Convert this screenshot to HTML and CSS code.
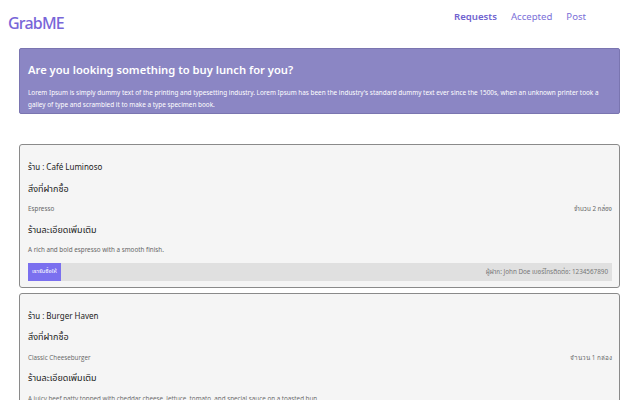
FILE: index.html
```html
<!DOCTYPE html>
<html lang="th">
<head>
<meta charset="utf-8">
<title>GrabME</title>
<link rel="stylesheet" href="styles.css">
</head>
<body>
<header class="topbar">
  <div class="logo">GrabME</div>
  <nav class="nav">
    <a class="nav-link active" href="#">Requests</a>
    <a class="nav-link" href="#">Accepted</a>
    <a class="nav-link" href="#">Post</a>
  </nav>
</header>
<main class="page">
  <section class="banner">
    <h1 class="banner-title">Are you looking something to buy lunch for you?</h1>
    <p class="banner-text">Lorem Ipsum is simply dummy text of the printing and typesetting industry. Lorem Ipsum has been the industry's standard dummy text ever since the 1500s, when an unknown printer took a galley of type and scrambled it to make a type specimen book.</p>
  </section>

  <div class="cards">
    <article class="card">
      <div class="row shop">ร้าน : Café Luminoso</div>
      <div class="row heading">สิ่งที่ฝากซื้อ</div>
      <div class="row item"><span>Espresso</span><span>จำนวน 2 กล่อง</span></div>
      <div class="row heading">ร้านละเอียดเพิ่มเติม</div>
      <div class="row desc">A rich and bold espresso with a smooth finish.</div>
      <div class="footer">
        <button class="accept">เรารับซื้อให้</button>
        <span class="contact">ผู้ฝาก: John Doe เบอร์โทรติดต่อ: 1234567890</span>
      </div>
    </article>

    <article class="card">
      <div class="row shop">ร้าน : Burger Haven</div>
      <div class="row heading">สิ่งที่ฝากซื้อ</div>
      <div class="row item alt"><span>Classic Cheeseburger</span><span>จำนวน 1 กล่อง</span></div>
      <div class="row heading">ร้านละเอียดเพิ่มเติม</div>
      <div class="row desc alt">A juicy beef patty topped with cheddar cheese, lettuce, tomato, and special sauce on a toasted bun.</div>
      <div class="footer">
        <button class="accept">เรารับซื้อให้</button>
        <span class="contact">ผู้ฝาก: Jane Smith เบอร์โทรติดต่อ: 0987654321</span>
      </div>
    </article>
  </div>
</main>
</body>
</html>
```
FILE: styles.css
```css
html, body {
  margin: 0;
  padding: 0;
  background: #ffffff;
}
body {
  font-family: "Noto Sans Thai", "Noto Sans", "DejaVu Sans", sans-serif;
  color: #333;
}
.topbar {
  display: flex;
  justify-content: space-between;
  align-items: flex-start;
  height: 40px;
  padding: 0 54px 0 8px;
}
.logo {
  font-family: "Noto Sans", sans-serif;
  font-weight: 500;
  font-size: 16px;
  letter-spacing: -0.8px;
  color: #7866d8;
  margin-top: 12px;
}
.nav {
  display: flex;
  gap: 14px;
  margin-top: 10px;
}
.nav-link {
  font-family: "Noto Sans", sans-serif;
  font-size: 9.6px;
  color: #7b6fd8;
  text-decoration: none;
}
.nav-link.active {
  font-weight: 600;
  color: #6f62cf;
}
.page {
  margin: 8px 20px 0 19px;
}
.banner {
  background: #8b86c4;
  border: 1px solid #7a75b0;
  border-radius: 2px;
  padding: 14px 8px 6px;
  color: #fff;
  height: 44px;
}
.banner-title {
  margin: 0 0 8px;
  font-size: 11.2px;
  font-weight: 600;
  line-height: 16px;
}
.banner-text {
  margin: 0;
  font-size: 6.4px;
  line-height: 12px;
}
.cards {
  margin-top: 30px;
  display: flex;
  flex-direction: column;
  gap: 5px;
}
.card {
  background: #f5f5f5;
  border: 1px solid #8a8a8a;
  border-radius: 3px;
  padding: 13px 7px 6px 8px;
}
.row {
  height: 20.5px;
  display: flex;
  align-items: center;
  justify-content: space-between;
}
.shop {
  font-size: 8px;
  color: #222;
}
.heading {
  font-size: 9px;
  color: #222;
}
.item {
  font-size: 6.3px;
  color: #666;
}
.desc {
  font-size: 6.3px;
  color: #666;
}
.alt {
  font-family: "Open Sans", sans-serif;
}
.footer {
  margin-top: 2px;
  height: 18px;
  background: #e0e0e0;
  display: flex;
  align-items: center;
  justify-content: space-between;
}
.accept {
  height: 18px;
  width: 33px;
  border: none;
  padding: 0;
  background: #7b70ef;
  color: #fff;
  font-family: inherit;
  font-size: 5.8px;
}
.contact {
  font-size: 6.3px;
  color: #777;
  margin-right: 4px;
}
```
